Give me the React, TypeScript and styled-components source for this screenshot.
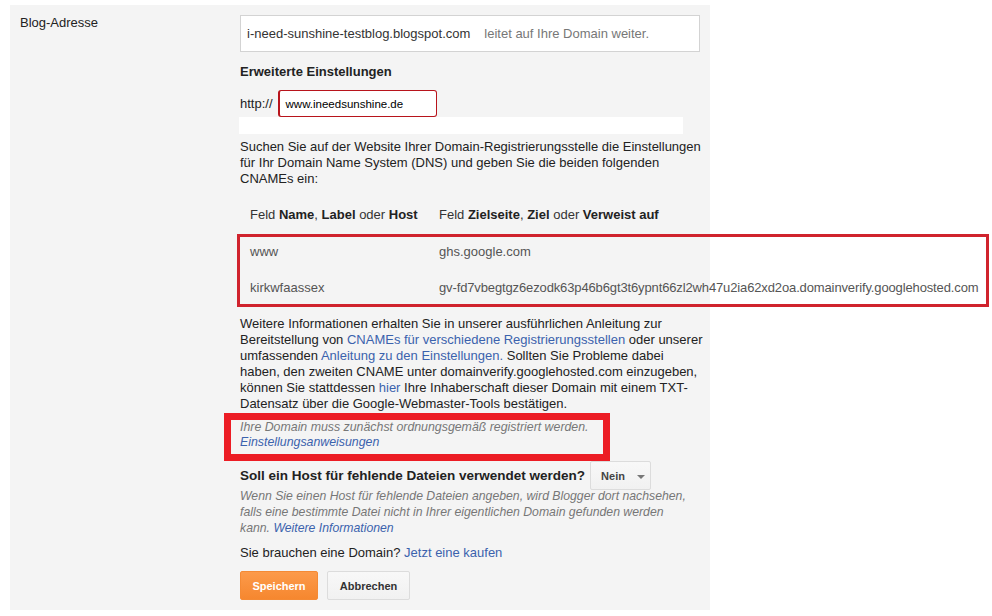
import React from "react";
import styled, { createGlobalStyle } from "styled-components";

const GlobalStyle = createGlobalStyle`
  body {
    margin: 0;
    background: #ffffff;
    font-family: "Liberation Sans", Arial, sans-serif;
    font-size: 13px;
    color: #222;
  }
`;

const Panel = styled.div`
  margin: 5px 0 0 10px;
  width: 700px;
  box-sizing: border-box;
  padding: 10px 10px 10px 10px;
  background: #f4f4f4;
  display: flex;
`;

const FieldLabel = styled.div`
  width: 220px;
  flex-shrink: 0;
  line-height: 16px;
  color: #222;
`;

const Content = styled.div`
  width: 460px;
  display: flex;
  flex-direction: column;
`;

const AddressBox = styled.div`
  height: 37px;
  box-sizing: border-box;
  border: 1px solid #d3d3d3;
  background: #fff;
  display: flex;
  align-items: center;
  padding: 0 6px;
  color: #333;
`;

const Hint = styled.span`
  margin-left: 14px;
  color: #777;
`;

const SectionTitle = styled.div`
  margin-top: 12px;
  line-height: 16px;
  font-weight: bold;
  color: #222;
`;

const HttpRow = styled.div`
  margin-top: 10px;
  display: flex;
  align-items: center;
  gap: 5px;
  color: #222;
`;

const DomainInput = styled.div`
  width: 159px;
  height: 27px;
  box-sizing: border-box;
  border: 1px solid #b8141c;
  border-left-width: 2px;
  border-radius: 3px;
  background: #fff;
  display: flex;
  align-items: center;
  padding-left: 6px;
  font-size: 11.5px;
  color: #000;
`;

const Strip = styled.div`
  width: 444px;
  height: 17px;
  margin-left: -1px;
  background: #fff;
`;

const Text = styled.p<{ $top: number }>`
  margin: ${({ $top }) => $top}px 0 0;
  line-height: 16px;
  white-space: nowrap;
  color: #222;
`;

const Link = styled.a`
  color: #3b62ad;
  text-decoration: none;
`;

const Grid = styled.div`
  display: grid;
  grid-template-columns: 189px auto;
  line-height: 16px;
  white-space: nowrap;
`;

const TableHead = styled(Grid)`
  margin-top: 20px;
  padding-left: 10px;
  color: #333;

  b {
    color: #222;
  }
`;

const TableBox = styled.div`
  margin: 11px 0 0 -3px;
  width: 752px;
  box-sizing: border-box;
  border: 3px solid #d0232d;
  padding: 7px 0 8px 10px;
`;

const TableRow = styled(Grid)<{ $gap?: boolean }>`
  color: #555;
  margin-top: ${({ $gap }) => ($gap ? "20px" : "0")};
`;

const TargetValue = styled.span`
  letter-spacing: -0.13px;
`;

const Notice = styled.div`
  margin: 1px 0 0 -16px;
  width: 386px;
  box-sizing: border-box;
  border: 7px solid #ec1c24;
  padding: 0 0 4px 9px;
  font-size: 12.35px;
  font-style: italic;
  line-height: 15px;
  color: #777;
`;

const HostRow = styled.div`
  display: flex;
  align-items: center;
  gap: 5px;
`;

const HostQuestion = styled.span`
  font-size: 13.5px;
  font-weight: bold;
  color: #222;
`;

const Dropdown = styled.div`
  width: 61px;
  height: 29px;
  box-sizing: border-box;
  border: 1px solid #dcdcdc;
  border-radius: 2px;
  background: linear-gradient(#f8f8f8, #f1f1f1);
  display: flex;
  align-items: center;
  padding-left: 10px;
  gap: 12px;
  font-size: 11px;
  font-weight: bold;
  color: #444;
`;

const Caret = styled.span`
  width: 0;
  height: 0;
  border-left: 4px solid transparent;
  border-right: 4px solid transparent;
  border-top: 4px solid #777;
  margin-top: 2px;
`;

const Note = styled.p`
  margin: -2px 0 0;
  font-size: 12.25px;
  font-style: italic;
  line-height: 16px;
  white-space: nowrap;
  color: #777;
`;

const Buttons = styled.div`
  margin-top: 10px;
  display: flex;
  gap: 9px;
`;

const Button = styled.button<{ $primary?: boolean }>`
  height: 29px;
  box-sizing: border-box;
  border-radius: 2px;
  border: 1px solid ${({ $primary }) => ($primary ? "#f48a35" : "#dcdcdc")};
  background: ${({ $primary }) =>
    $primary
      ? "linear-gradient(#fc9a4a, #f6872f)"
      : "linear-gradient(#f8f8f8, #f1f1f1)"};
  color: ${({ $primary }) => ($primary ? "#fff" : "#333")};
  font-family: "Liberation Sans", Arial, sans-serif;
  font-size: 11px;
  font-weight: bold;
  padding: 0;
  width: ${({ $primary }) => ($primary ? "78px" : "83px")};
  cursor: pointer;
`;

export default function App() {
  return (
    <>
      <GlobalStyle />
      <Panel>
        <FieldLabel>Blog-Adresse</FieldLabel>
        <Content>
          <AddressBox>
            i-need-sunshine-testblog.blogspot.com
            <Hint>leitet auf Ihre Domain weiter.</Hint>
          </AddressBox>

          <SectionTitle>Erweiterte Einstellungen</SectionTitle>
          <HttpRow>
            http://
            <DomainInput>www.ineedsunshine.de</DomainInput>
          </HttpRow>
          <Strip />

          <Text $top={5}>
            Suchen Sie auf der Website Ihrer Domain-Registrierungsstelle die Einstellungen
            <br />
            für Ihr Domain Name System (DNS) und geben Sie die beiden folgenden
            <br />
            CNAMEs ein:
          </Text>

          <TableHead>
            <span>
              Feld <b>Name</b>, <b>Label</b> oder <b>Host</b>
            </span>
            <span>
              Feld <b>Zielseite</b>, <b>Ziel</b> oder <b>Verweist auf</b>
            </span>
          </TableHead>
          <TableBox>
            <TableRow>
              <span>www</span>
              <span>ghs.google.com</span>
            </TableRow>
            <TableRow $gap>
              <span>kirkwfaassex</span>
              <TargetValue>gv-fd7vbegtgz6ezodk63p46b6gt3t6ypnt66zl2wh47u2ia62xd2oa.domainverify.googlehosted.com</TargetValue>
            </TableRow>
          </TableBox>

          <Text $top={9}>
            Weitere Informationen erhalten Sie in unserer ausführlichen Anleitung zur
            <br />
            Bereitstellung von <Link href="#">CNAMEs für verschiedene Registrierungsstellen</Link> oder unserer
            <br />
            umfassenden <Link href="#">Anleitung zu den Einstellungen.</Link> Sollten Sie Probleme dabei
            <br />
            haben, den zweiten CNAME unter domainverify.googlehosted.com einzugeben,
            <br />
            können Sie stattdessen <Link href="#">hier</Link> Ihre Inhaberschaft dieser Domain mit einem TXT-
            <br />
            Datensatz über die Google-Webmaster-Tools bestätigen.
          </Text>

          <Notice>
            Ihre Domain muss zunächst ordnungsgemäß registriert werden.
            <br />
            <Link href="#">Einstellungsanweisungen</Link>
          </Notice>

          <HostRow>
            <HostQuestion>Soll ein Host für fehlende Dateien verwendet werden?</HostQuestion>
            <Dropdown>
              Nein
              <Caret />
            </Dropdown>
          </HostRow>
          <Note>
            Wenn Sie einen Host für fehlende Dateien angeben, wird Blogger dort nachsehen,
            <br />
            falls eine bestimmte Datei nicht in Ihrer eigentlichen Domain gefunden werden
            <br />
            kann. <Link href="#">Weitere Informationen</Link>
          </Note>

          <Text $top={9}>
            Sie brauchen eine Domain? <Link href="#">Jetzt eine kaufen</Link>
          </Text>

          <Buttons>
            <Button $primary>Speichern</Button>
            <Button>Abbrechen</Button>
          </Buttons>
        </Content>
      </Panel>
    </>
  );
}
